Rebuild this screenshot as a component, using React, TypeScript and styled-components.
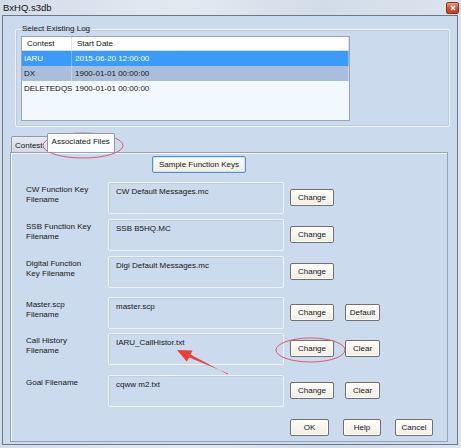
import styled, { createGlobalStyle } from 'styled-components'

const GlobalStyle = createGlobalStyle`
	html, body {
		margin: 0;
		padding: 0;
	}
	body {
		font-family: 'Liberation Sans', Arial, sans-serif;
		font-size: 8px;
		color: #161616;
	}
`

const logs = [
	{ contest: 'IARU', start: '2015-06-20 12:00:00', state: 'selected' },
	{ contest: 'DX', start: '1900-01-01 00:00:00', state: 'inactive' },
	{ contest: 'DELETEDQS', start: '1900-01-01 00:00:00', state: 'none' },
]

const files = [
	{ label: ['CW Function Key', 'Filename'], value: 'CW Default Messages.mc', top: 9, extra: '' },
	{ label: ['SSB Function Key', 'Filename'], value: 'SSB B5HQ.MC', top: 5, extra: '' },
	{ label: ['Digital Function', 'Key Filename'], value: 'Digi Default Messages.mc', top: 5, extra: '' },
	{ label: ['Master.scp', 'Filename'], value: 'master.scp', top: 9, extra: 'Default' },
	{ label: ['Call History', 'Filename'], value: 'IARU_CallHistor.txt', top: 4, extra: 'Clear' },
	{ label: ['Goal Filename'], value: 'cqww m2.txt', top: 10, extra: 'Clear' },
]

const Annotations = () => (
	<Overlay width="461" height="448" viewBox="0 0 461 448">
		<ellipse cx="83" cy="145.5" rx="40" ry="12.5" fill="none" stroke="#d4606c" strokeWidth="1" />
		<ellipse cx="310.5" cy="350" rx="34.5" ry="12" fill="none" stroke="#d4606c" strokeWidth="1" />
		<polygon
			points="228,374.6 190.4,354.4 192.6,350.6 177,350 186.8,361.4 189.2,357.6 228,373.6"
			fill="#ea3f36"
		/>
	</Overlay>
)

export default function App() {
	return (
		<>
			<GlobalStyle />
			<Window>
				<TitleBar>
					<Title>BxHQ.s3db</Title>
					<CloseButton>
						<svg width="6" height="6" viewBox="0 0 6 6">
							<path d="M1 1 L5 5 M5 1 L1 5" stroke="#fff" strokeWidth="1.4" />
						</svg>
					</CloseButton>
				</TitleBar>
				<Frame>
					<GroupBox>
						<Legend>Select Existing Log</Legend>
						<List>
							<ListHeader>
								<HeaderCell $w={50}>Contest</HeaderCell>
								<HeaderCell $w={0}>Start Date</HeaderCell>
							</ListHeader>
							{logs.map((log) => (
								<ListRow key={log.contest} $state={log.state}>
									<Cell $w={50} $state={log.state}>
										{log.contest}
									</Cell>
									<Cell $w={0} $state={log.state}>
										{log.start}
									</Cell>
								</ListRow>
							))}
						</List>
					</GroupBox>

					<TabStrip>
						<Tab>Contest</Tab>
						<Tab $active>Associated Files</Tab>
					</TabStrip>
					<TabPanel>
						<SampleButton>Sample Function Keys</SampleButton>
						{files.map((f) => (
							<FileRow key={f.value} $top={f.top}>
								<FieldLabel>
									{f.label.map((line) => (
										<div key={line}>{line}</div>
									))}
								</FieldLabel>
								<FileBox>{f.value}</FileBox>
								<Actions>
									<Button $w={44}>Change</Button>
									{f.extra && <Button $w={35}>{f.extra}</Button>}
								</Actions>
							</FileRow>
						))}
						<Footer>
							<Button $w={39}>OK</Button>
							<Button $w={38}>Help</Button>
							<Button $w={38}>Cancel</Button>
						</Footer>
					</TabPanel>
				</Frame>
				<Annotations />
			</Window>
		</>
	)
}

const Window = styled.div`
	position: relative;
	width: 461px;
	height: 448px;
	display: flex;
	flex-direction: column;
	background: linear-gradient(90deg, #d3dde9 0%, #e2e9f1 40%, #d2dce8 70%, #dbe4ee 100%);
	overflow: hidden;
`
const TitleBar = styled.div`
	height: 15px;
	display: flex;
	align-items: center;
	justify-content: space-between;
	padding: 0 2px 0 3px;
`
const Title = styled.span`
	font-size: 9.5px;
	color: #111;
`
const CloseButton = styled.div`
	width: 13px;
	height: 12px;
	margin-top: 1px;
	display: flex;
	align-items: center;
	justify-content: center;
	border: 1px solid #8a3324;
	border-radius: 2px;
	box-sizing: border-box;
	background: linear-gradient(#ec9a80, #d4532f 50%, #c53f20);
`
const Frame = styled.div`
	flex: 1;
	margin: 0 3px 3px 2px;
	border: 1px solid #6c7788;
	background: #cbdaec;
	display: flex;
	flex-direction: column;
`
const GroupBox = styled.fieldset`
	margin: 8px 7px 0 12px;
	padding: 2px 0 5px 5px;
	border: 1px solid #eef3f9;
	border-radius: 2px;
	box-shadow: inset 0 0 0 1px #bfcbda;
	min-width: 0;
`
const Legend = styled.legend`
	padding: 0 1px;
	line-height: 10px;
	font-size: 8px;
`
const List = styled.div`
	width: 329px;
	height: 85px;
	box-sizing: border-box;
	border: 1px solid #9aa6b6;
	background: #f2f9fe;
`
const ListHeader = styled.div`
	display: flex;
	height: 13px;
	background: #fdfeff;
	border-bottom: 1px solid #d4dce6;
`
const HeaderCell = styled.div<{ $w: number }>`
	${(p) => (p.$w ? `width: ${p.$w}px;` : 'flex: 1;')}
	box-sizing: border-box;
	padding-left: 5px;
	line-height: 13px;
	border-right: 1px solid #dde3ea;
`
const ListRow = styled.div<{ $state: string }>`
	display: flex;
	height: 15px;
	background: ${(p) =>
		p.$state === 'selected' ? '#3a9bf8' : p.$state === 'inactive' ? '#a9bedb' : 'transparent'};
	color: ${(p) => (p.$state === 'selected' ? '#fff' : '#161616')};
`
const Cell = styled.div<{ $w: number; $state: string }>`
	${(p) => (p.$w ? `width: ${p.$w}px;` : 'flex: 1;')}
	box-sizing: border-box;
	padding-left: ${(p) => (p.$w ? 2 : 3)}px;
	line-height: 15px;
	border-right: 1px solid ${(p) => (p.$state === 'none' ? 'transparent' : '#ffffff55')};
	white-space: nowrap;
`
const TabStrip = styled.div`
	display: flex;
	align-items: flex-end;
	height: 19px;
	margin: 6px 0 0 8px;
`
const Tab = styled.div<{ $active?: boolean }>`
	height: ${(p) => (p.$active ? 19 : 16)}px;
	box-sizing: border-box;
	padding: ${(p) => (p.$active ? '3px 4px 0' : '4px 4px 0 3px')};
	line-height: 10px;
	border: 1px solid #8f9bab;
	border-bottom: none;
	border-radius: 2px 2px 0 0;
	background: ${(p) => (p.$active ? '#fbfdff' : 'linear-gradient(#e6ebf1, #d3dae4)')};
	margin-left: ${(p) => (p.$active ? -1 : 0)}px;
	position: relative;
	z-index: ${(p) => (p.$active ? 1 : 0)};
	white-space: nowrap;
`
const TabPanel = styled.div`
	flex: 1;
	margin: 0 9px 2px 7px;
	border: 1px solid #97a3b3;
	box-shadow: inset 1px 1px 0 #f3f7fb;
	background: #cbdaec;
	padding: 3px 0 0 15px;
	display: flex;
	flex-direction: column;
	align-items: flex-start;
`
const Button = styled.div<{ $w: number }>`
	width: ${(p) => p.$w}px;
	height: 17px;
	box-sizing: border-box;
	display: flex;
	align-items: center;
	justify-content: center;
	border: 1px solid #707070;
	border-radius: 2px;
	background: linear-gradient(#fefdf9, #f0eee4);
	box-shadow: inset 0 0 0 1px #ffffff;
	font-size: 8px;
	white-space: nowrap;
`
const SampleButton = styled(Button).attrs({ $w: 94 })`
	margin-left: 126px;
	border-color: #5b8fc4;
	box-shadow: inset 0 0 0 1px #c9e3f7;
`
const FileRow = styled.div<{ $top: number }>`
	display: grid;
	grid-template-columns: 82px 176px auto;
	align-items: center;
	margin-top: ${(p) => p.$top}px;
`
const FieldLabel = styled.div`
	align-self: start;
	padding-top: 3px;
	line-height: 10px;
`
const FileBox = styled.div`
	height: 32px;
	box-sizing: border-box;
	padding: 4px 7px;
	line-height: 10px;
	border: 1px solid #eef3f9;
	border-radius: 2px;
	box-shadow: inset 1px 1px 0 #c2cddb;
`
const Actions = styled.div`
	display: flex;
	gap: 11px;
	margin-left: 6px;
	margin-top: -1px;
`
const Footer = styled.div`
	display: flex;
	gap: 14px;
	margin: 12px 0 0 264px;
`
const Overlay = styled.svg`
	position: absolute;
	left: 0;
	top: 0;
	pointer-events: none;
`
